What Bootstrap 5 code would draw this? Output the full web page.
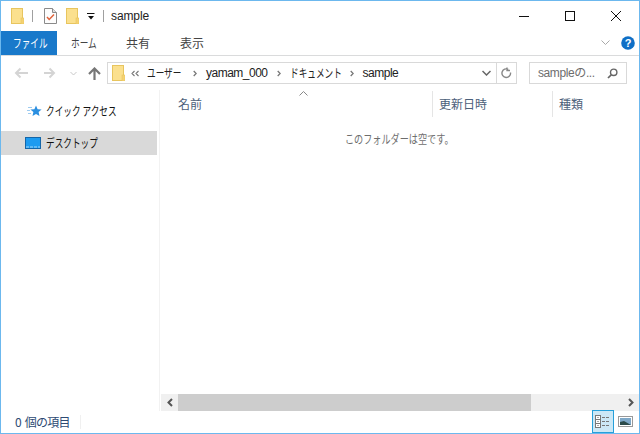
<!DOCTYPE html>
<html lang="ja"><head><meta charset="utf-8"><title>sample</title>
<link href="https://cdn.jsdelivr.net/npm/bootstrap@5.3.0/dist/css/bootstrap.min.css" rel="stylesheet">
<style>
html,body{height:100%;margin:0;overflow:hidden;background:#fff}
body{font-family:"Noto Sans CJK JP","Liberation Sans",sans-serif;font-size:12px;color:#1e1e1e}
svg{display:block;flex:none}
.win{width:640px;height:434px;border:1px solid #6cb8ee;background:#fff}
.titlebar{height:30px;padding-left:10px;flex:none}
.qa-sep{width:1px;height:12px;background:#a0a0a0;flex:none}
.ttl{font-family:"Liberation Sans",sans-serif;font-size:12px;color:#222;margin-left:7px;letter-spacing:-.1px}
.wbtn{width:46px;height:30px}
.ribbon{height:25px;border-bottom:1px solid #dadbdc;flex:none}
.rtab{height:24px;display:flex;align-items:center;justify-content:center;color:#444;font-size:12px}
.rtab-file{width:56px;background:#1979ca;color:#fff}
.rtab-w{width:54px}
.addrrow{height:34px;padding-left:13px;padding-top:6px;flex:none}
.navic{height:22px;display:flex;align-items:center}
.addr{width:410px;height:22px;border:1px solid #d9d9d9;margin-left:6px;flex:none}
.lat{font-family:"Liberation Sans",sans-serif;letter-spacing:-.5px}
.ctxt{color:#222;white-space:nowrap}
.srch{width:98px;height:22px;border:1px solid #d9d9d9;margin-left:12px;padding:0 8px 0 8px;color:#6d6d6d;flex:none}
.srch span{font-family:"Liberation Sans","Noto Sans CJK JP",sans-serif;letter-spacing:-.4px;white-space:nowrap}
.mainrow{min-height:0}
.sidebar{width:159px;border-right:1px solid #f2f2f2;padding-top:9px;flex:none}
.nav-row{height:24px;color:#111}
.nav-star{padding-left:26px}
.nav-sel{background:#d9d9d9;width:156px;padding-left:24px;margin-top:8px}
.sq{display:inline-block;white-space:nowrap;transform:scaleX(.72);transform-origin:0 50%}
.w26{width:26px}.w33{width:33px}.w36{width:36px}.w50{width:50px}.w52{width:52px}.w74{width:74px}
.colhdr{height:29px;color:#4c607a;position:relative;flex:none}
.hc{height:26px;margin-top:1px;display:flex;align-items:center;padding-left:6px;border-right:1px solid #e5e5e5}
.hc-name{width:273px;padding-left:18px}
.hc-date{width:120px}
.hc-type{border-right:0;flex-grow:1}
.sortmark{position:absolute;left:139px;top:1px}
.emptymsg{color:#6d6d6d;padding-top:11px;padding-left:185px;min-height:0}
.emptymsg .sq{transform:scaleX(.76)}
.scrollb{height:17px;background:#f0f0f0;margin-left:1px;flex:none}
.sthumb{width:353px;height:17px;background:#cdcdcd}
.sarr{width:17px;height:17px}
.sarr-r{margin-left:auto}
.statusbar{height:22px;color:#2d4a73;padding-left:14px;flex:none}
.stcount{letter-spacing:-.75px;word-spacing:2px}
.stsep{width:1px;height:14px;background:#f0f0f0;margin-left:10px}
.vbtn{width:22px;height:23px;margin-top:-1px}
.vbtn-on{background:#cce8f6;border:1px solid #26a0da}
.vgrp{padding-right:3px;margin-top:-1px}
.l5{margin-left:5px}.l4{margin-left:4px}.l6{margin-left:6px}.l8{margin-left:8px}.l9{margin-left:9px}.l10{margin-left:10px}.l11{margin-left:11px}.l14{margin-left:14px}.l16{margin-left:16px}.r5{margin-right:5px}.r8{margin-right:11px}
.rfr{width:20px;border-left:1px solid #d9d9d9}
.hlp{margin-right:4px}
</style></head><body>
<svg width="0" height="0" class="position-absolute"><defs><g id="fld"><rect x=".5" y=".5" width="11" height="15" fill="#fbe08e" stroke="#e8c55e"/><rect x="10" y="10" width="3" height="6" fill="#f5d272" stroke="#e8c55e" stroke-width=".6"/></g></defs></svg>
<div class="win d-flex flex-column">
 <div class="titlebar d-flex align-items-center">
  <svg width="13" height="16" viewBox="0 0 13 16"><use href="#fld"/></svg>
  <span class="qa-sep l8"></span>
  <svg width="13" height="16" viewBox="0 0 13 16" class="l11"><path d="M.5.5h8l4 4v11H.5z" fill="#fdfdfd" stroke="#8a8a8a"/><path d="M8.500.5v4h4" fill="#ddd" stroke="#8a8a8a"/><path d="M3 9l2.200 2.500L10 6.500" fill="none" stroke="#e0623a" stroke-width="1.500"/></svg>
  <svg width="13" height="16" viewBox="0 0 13 16" class="l9"><use href="#fld"/></svg>
  <svg width="8" height="7" viewBox="0 0 8 7" class="l8"><path d="M0 .5h7.500" stroke="#111"/><path d="M1 3h6L4 6.500z" fill="#111"/></svg>
  <span class="qa-sep l8"></span>
  <span class="ttl">sample</span>
  <div class="ms-auto d-flex">
   <div class="wbtn d-flex align-items-center justify-content-center"><svg width="10" height="10"><path d="M0 5.500h10" stroke="#111"/></svg></div>
   <div class="wbtn d-flex align-items-center justify-content-center"><svg width="10" height="10"><rect x=".5" y=".5" width="9" height="9" fill="none" stroke="#111"/></svg></div>
   <div class="wbtn d-flex align-items-center justify-content-center"><svg width="10" height="10"><path d="M0 0l10 10M10 0L0 10" stroke="#111"/></svg></div>
  </div>
 </div>
 <div class="ribbon d-flex">
  <div class="rtab rtab-file"><span class="sq w33">ファイル</span></div>
  <div class="rtab rtab-w"><span class="sq w26">ホーム</span></div>
  <div class="rtab rtab-w">共有</div>
  <div class="rtab rtab-w">表示</div>
  <div class="ms-auto d-flex align-items-center">
   <svg width="9" height="6" viewBox="0 0 9 6" class="r8"><path d="M.5.500l4 4 4-4" fill="none" stroke="#a9a9a9"/></svg>
   <svg width="14" height="14" viewBox="0 0 14 14" class="hlp"><circle cx="7" cy="7" r="6.800" fill="#0f6fc6"/><text x="7" y="11" font-family="Liberation Sans" font-weight="700" font-size="11" fill="#fff" text-anchor="middle">?</text></svg>
  </div>
 </div>
 <div class="addrrow d-flex align-items-start">
  <div class="navic"><svg width="14" height="12" viewBox="0 0 14 12"><path d="M14 6H2M6.500 1.500L2 6l4.500 4.500" fill="none" stroke="#d4d4d4" stroke-width="2"/></svg></div>
  <div class="navic l16"><svg width="12" height="12" viewBox="0 0 12 12"><path d="M0 6h10M5.500 1.500L10 6l-4.500 4.500" fill="none" stroke="#d4d4d4" stroke-width="2"/></svg></div>
  <div class="navic l14"><svg width="7" height="5" viewBox="0 0 7 5"><path d="M.5 1l3 3 3-3" fill="none" stroke="#c8c8c8"/></svg></div>
  <div class="navic l11"><svg width="13" height="13" viewBox="0 0 13 13"><path d="M6.500 13V2M1 7l5.500-5.500L12 7" fill="none" stroke="#777" stroke-width="2.200"/></svg></div>
  <div class="addr d-flex align-items-center">
   <svg width="13" height="16" viewBox="0 0 13 16" class="l4"><use href="#fld"/></svg>
   <svg width="8" height="7" viewBox="0 0 8 7" class="l6"><path d="M3.500 1L1 3.500 3.500 6M7.500 1L5 3.500 7.500 6" fill="none" stroke="#777" stroke-width="1.100"/></svg>
   <span class="ctxt sq w36 l8">ユーザー</span>
   <svg width="4" height="7" viewBox="0 0 4 7" class="l10"><path d="M.7 1l2.500 2.500L.7 6" fill="none" stroke="#777" stroke-width="1.300"/></svg>
   <span class="ctxt lat l9">yamam_000</span>
   <svg width="4" height="7" viewBox="0 0 4 7" class="l9"><path d="M.7 1l2.500 2.500L.7 6" fill="none" stroke="#777" stroke-width="1.300"/></svg>
   <span class="ctxt sq w50 l9">ドキュメント</span>
   <svg width="4" height="7" viewBox="0 0 4 7" class="l10"><path d="M.7 1l2.500 2.500L.7 6" fill="none" stroke="#777" stroke-width="1.300"/></svg>
   <span class="ctxt lat l9">sample</span>
   <div class="ms-auto d-flex align-items-center h-100">
    <svg width="9" height="6" viewBox="0 0 9 6" class="r5"><path d="M.5 1l4 4 4-4" fill="none" stroke="#666" stroke-width="1.500"/></svg>
    <div class="rfr d-flex align-items-center justify-content-center h-100"><svg width="11" height="12" viewBox="0 0 11 12"><path d="M9.500 5.500a4.300 4.300 0 1 1-2.200-3.100M6 .5v3h3" fill="none" stroke="#888" stroke-width="1.400"/></svg></div>
   </div>
  </div>
  <div class="srch d-flex align-items-center justify-content-between"><span>sampleの...</span>
   <svg width="11" height="11" viewBox="0 0 11 11"><circle cx="6.700" cy="4.300" r="3.200" fill="none" stroke="#666" stroke-width="1.400"/><path d="M4.200 6.800L1 10" stroke="#666" stroke-width="1.700"/></svg></div>
 </div>
 <div class="mainrow d-flex flex-grow-1">
  <div class="sidebar">
   <div class="nav-row nav-star d-flex align-items-center">
    <svg width="15" height="13" viewBox="0 0 15 13"><path d="M9 .5l1.600 3.700 4 .3-3 2.600.9 4L9 9 5.500 11.100l.9-4-3-2.600 4-.3z" fill="#2b8fe0"/><path d="M1 2.500h4M0 5.500h3M1 8.500h3" stroke="#9dcbf0"/></svg>
    <span class="sq w74 l4">クイック アクセス</span></div>
   <div class="nav-row nav-sel d-flex align-items-center">
    <svg width="16" height="12" viewBox="0 0 16 12"><rect x=".5" y=".5" width="15" height="11" fill="#1d9bf0" stroke="#1566a8"/><path d="M1 10h14" stroke="#a6d8f8" stroke-dasharray="3 1"/></svg>
    <span class="sq w52 l5">デスクトップ</span></div>
  </div>
  <div class="flex-grow-1 d-flex flex-column">
   <div class="colhdr d-flex">
    <span class="sortmark"><svg width="9" height="5"><path d="M.5 4.500l4-4 4 4" fill="none" stroke="#888"/></svg></span>
    <div class="hc hc-name">名前</div>
    <div class="hc hc-date">更新日時</div>
    <div class="hc hc-type">種類</div>
   </div>
   <div class="emptymsg flex-grow-1"><span class="sq">このフォルダーは空です。</span></div>
   <div class="scrollb d-flex">
    <div class="sarr d-flex align-items-center justify-content-center"><svg width="6" height="9"><path d="M5 1L1.500 4.500 5 8" fill="none" stroke="#555" stroke-width="2"/></svg></div>
    <div class="sthumb"></div>
    <div class="sarr sarr-r d-flex align-items-center justify-content-center"><svg width="6" height="9"><path d="M1 1l3.500 3.500L1 8" fill="none" stroke="#555" stroke-width="2"/></svg></div>
   </div>
  </div>
 </div>
 <div class="statusbar d-flex align-items-center">
  <span class="stcount">0 個の項目</span><span class="stsep"></span>
  <div class="ms-auto d-flex align-items-center vgrp">
   <div class="vbtn vbtn-on d-flex align-items-center justify-content-center"><svg width="16" height="13" viewBox="0 0 16 13"><rect x=".5" y=".5" width="5" height="12" fill="#fff" stroke="#777"/><path d="M1 4.500h4M1 8.500h4" stroke="#777"/><path d="M2.500 2.500h1M2.500 6.500h1M2.500 10.500h1" stroke="#555"/><path d="M7 2.500h8M7 6.500h8M7 10.500h8" stroke="#777" stroke-dasharray="3 1"/></svg></div>
   <div class="vbtn d-flex align-items-center justify-content-center"><svg width="15" height="11" viewBox="0 0 15 11"><rect x=".5" y=".5" width="14" height="10" fill="#fff" stroke="#999"/><rect x="2" y="2" width="11" height="7" fill="#7ea8c8"/><path d="M2 9V6l4-1 7 4z" fill="#2b4a4a"/></svg></div>
  </div>
 </div>
</div>
</body></html>
